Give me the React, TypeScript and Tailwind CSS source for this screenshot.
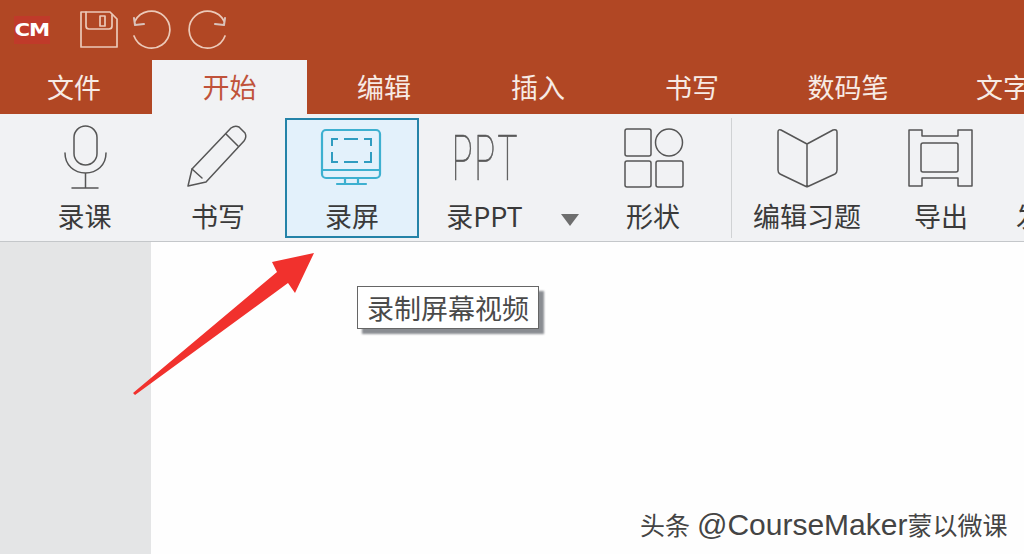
const cjk = { fontFamily: '"Noto Sans CJK SC", "Noto Sans", sans-serif' };

function RibbonItem({ label, view, children, w, selected }: { label: string; view: string; children: React.ReactNode; w: string; selected?: boolean }) {
  return (
    <div className={`${w} shrink-0 h-[120px] flex flex-col items-center border-2 ${selected ? 'border-[#2483a8] bg-[#e3f1fb]' : 'border-transparent'}`}>
      <svg viewBox={view} className="w-[72px] h-[66px] mt-[4px] shrink-0" fill="none" stroke={selected ? '#3db0d0' : '#565656'} strokeWidth="1.5" strokeLinejoin="round" strokeLinecap="round">
        {children}
      </svg>
      <div className="mt-[11px] text-[27px] leading-[30px] text-[#3a3a3a] whitespace-nowrap">{label}</div>
    </div>
  );
}

const tabs = [
  { t: '编辑', w: 'w-[154px]' },
  { t: '插入', w: 'w-[154px]' },
  { t: '书写', w: 'w-[154px]' },
  { t: '数码笔', w: 'w-[158px]' },
];

export default function App() {
  return (
    <div className="w-[1024px] h-[554px] overflow-hidden relative bg-white flex flex-col" style={cjk}>
      <div className="h-[60px] bg-[#b14724] flex items-center shrink-0">
        <div className="ml-[14px] w-[36px] h-[28px] bg-[#c03a2a] flex items-center justify-center shrink-0">
          <span className="text-white text-[17px] font-black leading-none tracking-[-1px] scale-x-[1.25]" style={{ fontFamily: '"DejaVu Sans", sans-serif' }}>CM</span>
        </div>
        <svg viewBox="78 8 150 42" className="ml-[28px] w-[150px] h-[42px] shrink-0" fill="none" stroke="#ecc9b8" strokeWidth="1.7" strokeLinejoin="round" strokeLinecap="round">
          <path d="M81 11h29l7 7v28H81z" />
          <path d="M86 11v14q0 3 3 3h20q3 0 3-3V14" />
          <rect x="100" y="15" width="5" height="10" />
          <path d="M135 20a18.500 18.500 0 1 1 -1 15" />
          <path d="M134 17l1 7 9-1" stroke="#d9c3bc" strokeWidth="2" />
          <path d="M224 20a18.500 18.500 0 1 0 1 15" />
          <path d="M225 17l-1 7-9-1" stroke="#d9c3bc" strokeWidth="2" />
        </svg>
      </div>
      <div className="h-[54px] bg-[#b14724] flex shrink-0 text-[27px] text-[#f7ebe5] whitespace-nowrap">
        <div className="w-[152px] shrink-0 flex items-center justify-center pr-[4px]">文件</div>
        <div className="w-[155px] shrink-0 bg-[#f1f2f4] flex items-center justify-center text-[#c0523a]">开始</div>
        {tabs.map((x) => (
          <div key={x.t} className={`${x.w} shrink-0 flex items-center justify-center`}>{x.t}</div>
        ))}
        <div className="pl-[49px] shrink-0 flex items-center">文字</div>
      </div>
      <div className="h-[128px] bg-[#f1f2f4] border-b border-[#c4c7ca] flex items-start pt-[4px] pl-[18px] shrink-0 overflow-hidden">
        <RibbonItem w="w-[133px]" label="录课" view="48 124 72 66">
          <rect x="73" y="126" width="23" height="39" rx="11.500" />
          <path d="M64 153c0 12 9 20 20.500 20S105 165 105 153M84.500 173v15M71 188h26" />
        </RibbonItem>
        <RibbonItem w="w-[134px]" label="书写" view="182 124 72 66">
          <path d="M188 186l4-17 39-41q4-3 8-1l6 6q2 4-1 8l-38 41z" />
          <path d="M192 169l10 9M226 134l12 12" />
        </RibbonItem>
        <RibbonItem w="w-[134px]" label="录屏" view="316 124 72 66" selected>
          <rect x="322" y="130" width="58" height="48" rx="4" strokeWidth="2.200" />
          <path d="M322 170h58M345 178v6M358 178v6M337 184h29" strokeWidth="2.200" />
          <path d="M332 146v-7h6M344 139h14M364 139h7v7M371 152v10h-7M358 162h-14M338 162h-6v-10" stroke="#2f9cc0" strokeWidth="2" strokeLinecap="butt" strokeLinejoin="miter" />
        </RibbonItem>
        <RibbonItem w="w-[131px]" label="录PPT" view="448 124 72 66">
          <text x="450" y="180" fontFamily="Inter" fontWeight="100" fontSize="62" textLength="68" lengthAdjust="spacingAndGlyphs" stroke="#5a5a5a" strokeWidth="0.7" fill="#5a5a5a">PPT</text>
        </RibbonItem>
        <div className="w-[40px] h-[120px] shrink-0 flex items-end justify-center pb-[12px]">
          <svg viewBox="0 0 18 12" className="w-[18px] h-[12px]"><path d="M0 0h18L9 12z" fill="#6e6e6e" /></svg>
        </div>
        <RibbonItem w="w-[126px]" label="形状" view="617 124 72 66">
          <rect x="625" y="129" width="26" height="27" rx="2" />
          <circle cx="669" cy="142.500" r="13.500" />
          <rect x="625" y="161" width="26" height="26" rx="2" />
          <rect x="656" y="161" width="27" height="26" rx="2" />
        </RibbonItem>
        <div className="ml-[15px] mr-[13px] w-px h-[120px] bg-[#d0d2d4] shrink-0" />
        <RibbonItem w="w-[124px]" label="编辑习题" view="771 124 72 66">
          <path d="M778 132q0-3 3-2l26 14 26-14q4-1 4 2v38q0 3-2 4l-26 12q-2 1-4 0l-25-12q-2-1-2-4zM807 144v43" />
        </RibbonItem>
        <RibbonItem w="w-[144px]" label="导出" view="905 124 72 66">
          <path d="M909 130h13v6h36v-6h14v56h-14v-8h-36v8h-13z" />
          <rect x="921" y="143" width="37" height="29" rx="2" />
        </RibbonItem>
        <RibbonItem w="w-[60px]" label="发布" view="0 0 72 66"><g /></RibbonItem>
      </div>
      <div className="flex-1 flex min-h-0">
        <div className="w-[151px] bg-[#e4e5e6] shrink-0" />
        <div className="flex-1 bg-[#fefefe]" />
      </div>

      <svg viewBox="0 0 1024 554" className="absolute left-0 top-0 w-[1024px] h-[554px] pointer-events-none">
        <path d="M314 253L272 262L277 272L133 393L135 395L288 283L295 293Z" fill="#f1312d" />
      </svg>
      <div className="absolute left-[357px] top-[286px] w-[182px] h-[43px] bg-white border border-[#666] shadow-[5px_5px_2px_#8a8d92] flex items-center justify-center text-[27px] leading-none text-[#4a4a4a] whitespace-nowrap">
        录制屏幕视频
      </div>
      <div className="absolute left-[640px] top-[509px] text-[25px] leading-[32px] text-[#444] whitespace-nowrap" style={{ fontFamily: '"Liberation Sans", "Noto Sans CJK SC", sans-serif' }}>
        头条 <span className="text-[30px]">@CourseMaker</span>蒙以微课
      </div>
    </div>
  );
}
